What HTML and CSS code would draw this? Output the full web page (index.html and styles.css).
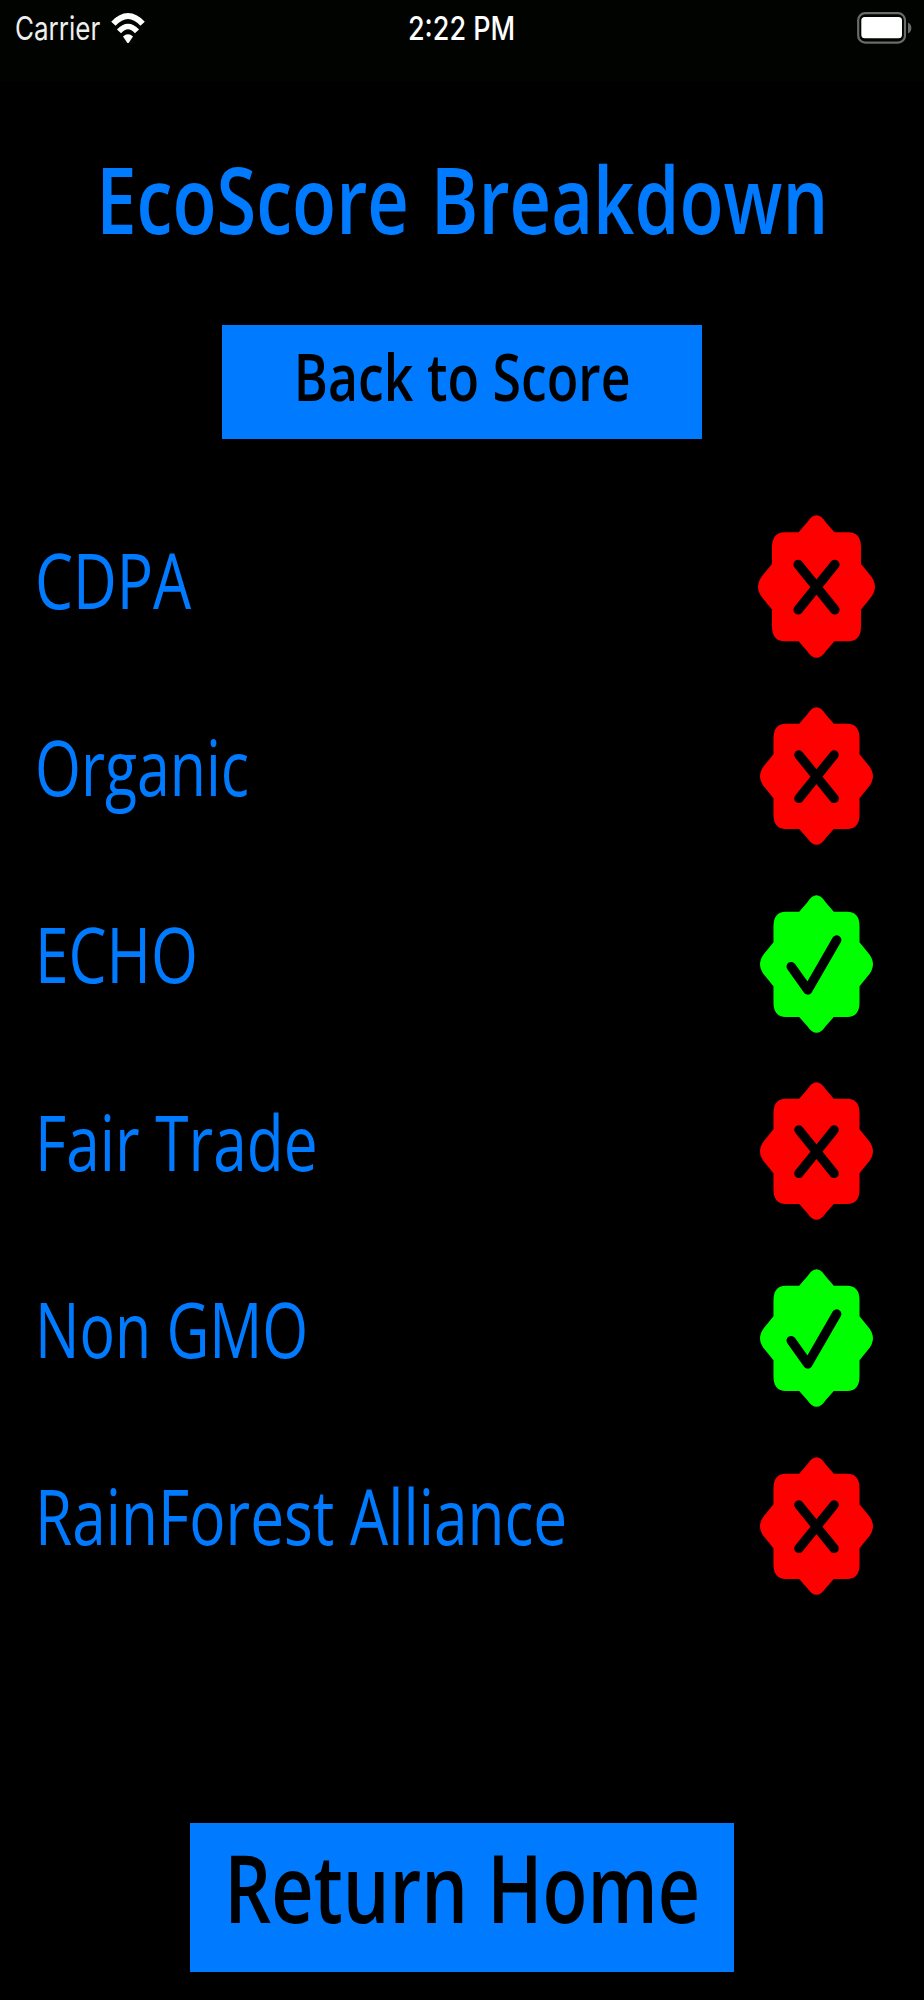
FILE: index.html
```html
<!DOCTYPE html>
<html lang="en">
<head>
  <meta charset="utf-8">
  <meta name="viewport" content="width=device-width, initial-scale=1.0">
  <title>EcoScore Breakdown</title>
  <link rel="stylesheet" href="styles.css">
</head>
<body>
  <!-- shared badge shapes -->
  <svg class="defs" width="0" height="0">
    <symbol id="seal" viewBox="54 43 352 430" preserveAspectRatio="none">
      <path d="M176 95 L201 66 Q230 21 259 66 L284 95 H326 Q364 95 364 141 V190 L388 220 Q424 259 388 298 L364 327 V377 Q364 423 326 423 H284 L259 451 Q230 494 201 451 L176 423 H134 Q96 423 96 377 V327 L72 298 Q36 259 72 220 L96 190 V141 Q96 95 134 95 Z"/>
    </symbol>
    <symbol id="cross" viewBox="54 43 352 430" preserveAspectRatio="none">
      <path d="M175 192 L285 328 M285 192 L175 328"/>
    </symbol>
    <symbol id="check" viewBox="54 43 352 430" preserveAspectRatio="none">
      <path d="M151 266 L203 339 L293 183"/>
    </symbol>
  </svg>

  <header class="status-bar">
    <div class="carrier">
      <span class="carrier-name">Carrier</span>
      <svg class="wifi" viewBox="0 0 34 31" preserveAspectRatio="none">
        <path d="M2.4 10.7 Q17 -4.7 31.6 10.7" stroke-width="6"/>
        <path d="M8 18.3 Q17 8.7 26 18.3" stroke-width="5.6"/>
        <path class="dot" d="M12 23.5 Q17 19 22 23.5 L17.8 29.7 Q17 30.6 16.2 29.7 Z"/>
      </svg>
    </div>
    <span class="time">2:22 PM</span>
    <svg class="battery" viewBox="0 0 56 32">
      <rect class="shell" x="1.2" y="1.2" width="46.8" height="29.4" rx="7"/>
      <rect class="level" x="4.3" y="5" width="40.7" height="21.3" rx="3.5"/>
      <path class="nub" d="M51 10.4 Q54.4 12 54.4 16 Q54.4 20 51 21.4 Z"/>
    </svg>
  </header>

  <main>
    <h1><span>EcoScore Breakdown</span></h1>

    <button class="back-button"><span>Back to Score</span></button>

    <ul class="scores">
      <li class="score first">
        <span class="label">CDPA</span>
        <svg class="badge fail"><use href="#seal"/><use class="mark" href="#cross"/></svg>
      </li>
      <li class="score">
        <span class="label narrow">Organic</span>
        <svg class="badge fail"><use href="#seal"/><use class="mark" href="#cross"/></svg>
      </li>
      <li class="score">
        <span class="label">ECHO</span>
        <svg class="badge pass"><use href="#seal"/><use class="mark" href="#check"/></svg>
      </li>
      <li class="score">
        <span class="label">Fair Trade</span>
        <svg class="badge fail"><use href="#seal"/><use class="mark" href="#cross"/></svg>
      </li>
      <li class="score">
        <span class="label narrow">Non GMO</span>
        <svg class="badge pass"><use href="#seal"/><use class="mark" href="#check"/></svg>
      </li>
      <li class="score">
        <span class="label">RainForest Alliance</span>
        <svg class="badge fail"><use href="#seal"/><use class="mark" href="#cross"/></svg>
      </li>
    </ul>

    <button class="home-button"><span>Return Home</span></button>
  </main>
</body>
</html>
```

FILE: styles.css
```css
* {
  box-sizing: border-box;
}

body {
  margin: 0;
  width: 924px;
  height: 2000px;
  overflow: hidden;
  background-color: #000;
  color: #007aff;
  font-family: "Open Sans", sans-serif;
  white-space: nowrap;
}

.defs {
  display: block;
}

.status-bar {
  display: grid;
  grid-template-columns: 1fr auto 1fr;
  align-items: center;
  height: 81px;
  padding: 0 11px 25px 15px;
  background-color: #010301;
  color: #fff;
  font-family: Inter, sans-serif;
  font-size: 32.5px;
}

.carrier {
  display: flex;
  align-items: center;
}

.carrier-name {
  width: 96px;
  color: #eee;
  transform: scaleX(0.8);
  transform-origin: left;
}

.wifi {
  width: 34px;
  height: 31px;
  fill: none;
  stroke: #fff;
}

.wifi .dot {
  fill: #fff;
  stroke: none;
}

.time {
  margin-right: 5px;
  font-weight: 500;
  transform: scaleX(0.83);
}

.battery {
  width: 56px;
  height: 32px;
  justify-self: end;
}

.shell {
  fill: none;
  stroke: #6b6b6b;
  stroke-width: 2.2;
}

.level {
  fill: #fff;
}

.nub {
  fill: #6b6b6b;
}

main {
  display: flex;
  flex-direction: column;
  align-items: center;
}

h1 {
  display: flex;
  justify-content: center;
  width: 100%;
  margin: 58px 0 66px;
  font-size: 92px;
  font-weight: 600;
  line-height: 120px;
}

h1 span {
  word-spacing: 4px;
  transform: scaleX(0.785);
}

button {
  display: flex;
  justify-content: center;
  align-items: flex-start;
  padding: 0;
  border: none;
  background-color: #007aff;
  color: #000;
  font-family: inherit;
  font-weight: 600;
  white-space: nowrap;
}

.back-button {
  width: 480px;
  height: 114px;
  font-size: 65px;
  line-height: 102px;
}

.back-button span {
  transform: scaleX(0.797);
}

.scores {
  width: 100%;
  margin: 56.5px 0 0;
  padding: 0 51px 0 35px;
  list-style: none;
}

.score {
  display: flex;
  align-items: center;
  justify-content: space-between;
  height: 187.33px;
}

.label {
  margin-bottom: 21px;
  font-size: 76.5px;
  line-height: 110px;
  transform: scaleX(0.789);
  transform-origin: left;
}

.label.narrow {
  transform: scaleX(0.771);
}

.badge {
  width: 113px;
  height: 138px;
}

.first .badge {
  width: 117px;
  height: 143px;
  margin-right: -2px;
  margin-bottom: 6px;
}

.fail {
  fill: #f00;
}

.pass {
  fill: #0f0;
}

.mark {
  fill: none;
  stroke: #000;
  stroke-width: 29;
  stroke-linecap: round;
  stroke-linejoin: round;
}

.home-button {
  width: 544px;
  height: 149px;
  margin-top: 203.5px;
  font-size: 93.5px;
  line-height: 127px;
}

.home-button span {
  transform: scaleX(0.787);
}
```
